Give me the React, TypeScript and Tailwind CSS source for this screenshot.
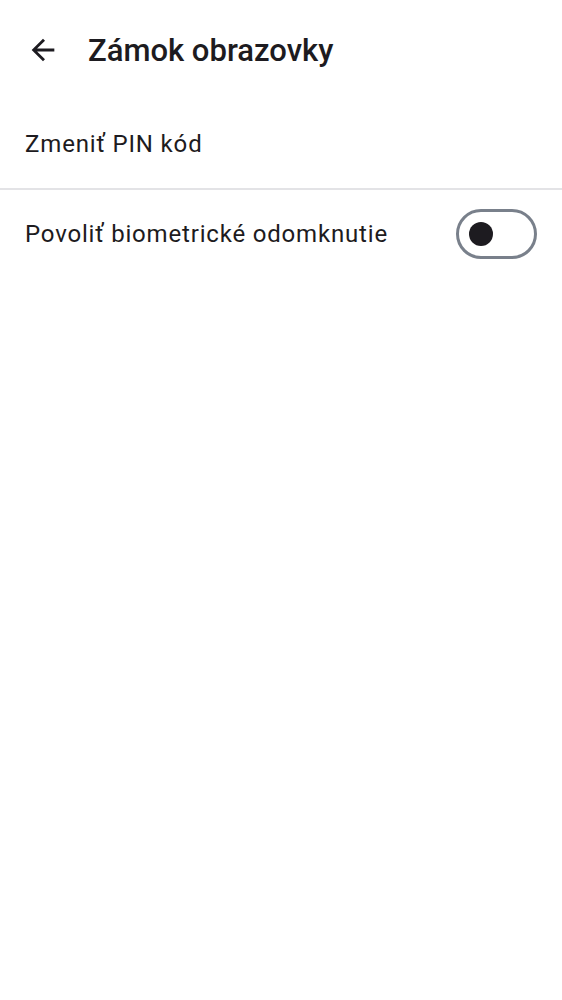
export default function App() {
  return (
    <div className="w-[562px] h-[1000px] bg-white text-[#1d1b20]" style={{ fontFamily: "Roboto, 'Noto Sans', sans-serif" }}>
      <header className="h-[100px] flex items-center">
        <button className="ml-[26px] w-[34px] h-[34px] flex items-center justify-center">
          <svg width="34" height="34" viewBox="0 0 24 24" fill="#1d1b20">
            <path d="M20 11H7.83l5.59-5.59L12 4l-8 8 8 8 1.41-1.41L7.83 13H20v-2z" />
          </svg>
        </button>
        <h1 className="ml-[28px] text-[31px] font-medium leading-none">Zámok obrazovky</h1>
      </header>
      <div className="h-[88px] flex items-center px-[25px] text-[24px] tracking-[0.85px]">Zmeniť PIN kód</div>
      <div className="h-[2px] bg-[#e3e3e6]" />
      <div className="h-[88px] flex items-center justify-between pl-[25px] pr-[25px] text-[24px] tracking-[0.82px]">
        <span>Povoliť biometrické odomknutie</span>
        <div className="w-[81px] h-[50px] rounded-full border-[3px] border-[#79808b] flex items-center pl-[10px]">
          <div className="w-[24px] h-[24px] rounded-full bg-[#1d1b20]" />
        </div>
      </div>
    </div>
  );
}
